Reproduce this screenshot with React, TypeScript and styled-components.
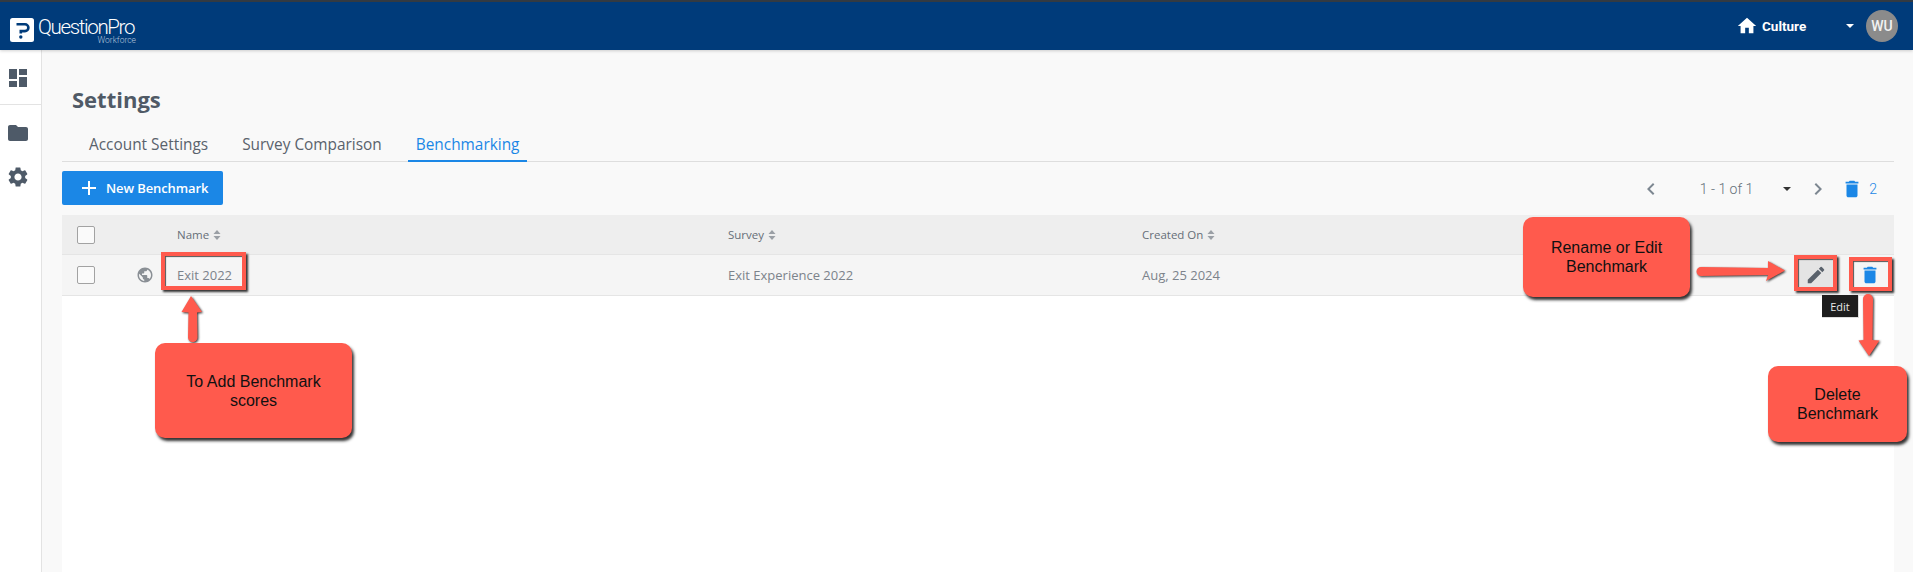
import React from "react";
import styled, { createGlobalStyle } from "styled-components";
import {
  MdAdd, MdChevronLeft, MdChevronRight, MdDashboard, MdDelete, MdEdit,
  MdFolder, MdHome, MdPublic, MdSettings,
} from "react-icons/md";

const Global = createGlobalStyle`
  html, body { margin: 0; padding: 0; height: 100%; background: #f9f9f9; }
  body { font-family: "Open Sans", "Liberation Sans", sans-serif; overflow: hidden; }
  * { box-sizing: border-box; }
`;

const Page = styled.div`
  position: relative;
  width: 1913px;
  height: 572px;
  overflow: hidden;
  display: flex;
  flex-direction: column;
`;

const Header = styled.header`
  height: 50px;
  flex: none;
  background: #003b7a;
  border-top: 2px solid #333a42;
  display: flex;
  align-items: center;
  padding: 0 15px 0 10px;
  box-shadow: 0 1px 3px rgba(0, 0, 0, .18);
  z-index: 1;
`;

const LogoMark = styled.svg`
  width: 24px;
  height: 24px;
  flex: none;
  margin-top: 8px;
`;

const LogoText = styled.div`
  margin-left: 4px;
  width: 98px;
  display: flex;
  flex-direction: column;
  align-items: flex-end;
  margin-top: 11px;
  color: #fff;
  font-family: "Roboto", sans-serif;
  font-weight: 300;
  white-space: nowrap;
`;

const LogoName = styled.span`
  align-self: flex-start;
  font-size: 20.5px;
  line-height: 17px;
  height: 17px;
  letter-spacing: -1.35px;
`;

const LogoSub = styled.span`
  font-size: 8.5px;
  line-height: 9px;
  height: 9px;
  color: #b6c6da;
`;

const HeaderRight = styled.div`
  margin-left: auto;
  display: flex;
  align-items: center;
  color: #fff;
`;

const HomeIcon = styled(MdHome)`
  font-size: 22px;
  margin-right: 4px;
`;

const Culture = styled.span`
  font-family: "Roboto", sans-serif;
  font-size: 13.5px;
  font-weight: 700;
  width: 84px;
`;

const Caret = styled.span<{ $color: string }>`
  width: 0;
  height: 0;
  border-left: 4px solid transparent;
  border-right: 4px solid transparent;
  border-top: 4px solid ${(p) => p.$color};
`;

const Avatar = styled.div`
  width: 32px;
  height: 32px;
  margin-left: 12px;
  border-radius: 50%;
  background: #8b8b8b;
  color: #f2f2f2;
  font-family: "Roboto", sans-serif;
  font-size: 14px;
  font-weight: 500;
  display: flex;
  align-items: center;
  justify-content: center;
`;

const Body = styled.div`
  flex: 1;
  display: flex;
  min-height: 0;
`;

const Sidebar = styled.nav`
  width: 42px;
  flex: none;
  background: #fff;
  border-right: 1px solid #e3e3e3;
  color: #4e5a68;
  display: flex;
  flex-direction: column;
`;

const SideItem = styled.div<{ $h: number; $line?: boolean }>`
  height: ${(p) => p.$h}px;
  padding: 2px 0 0 6px;
  display: flex;
  align-items: center;
  font-size: 24px;
  border-bottom: ${(p) => (p.$line ? "1px solid #e3e3e3" : "none")};
`;

const Main = styled.main`
  flex: 1;
  padding: 32px 19px 0 20px;
  display: flex;
  flex-direction: column;
`;

const Title = styled.h1`
  margin: 0 0 0 10px;
  height: 34px;
  font-size: 22px;
  line-height: 34px;
  font-weight: 700;
  color: #505a66;
`;

const Tabs = styled.div`
  margin-top: 12px;
  height: 34px;
  padding-left: 19px;
  display: flex;
  border-bottom: 1px solid #dedede;
`;

const Tab = styled.div<{ $active?: boolean }>`
  padding: 0 8px;
  margin-right: 18px;
  height: 34px;
  line-height: 34px;
  font-size: 15.4px;
  color: ${(p) => (p.$active ? "#1b87e6" : "#5a626c")};
  border-bottom: 2px solid ${(p) => (p.$active ? "#1b87e6" : "transparent")};
`;

const Toolbar = styled.div`
  margin-top: 9px;
  height: 34px;
  display: flex;
  align-items: center;
  justify-content: space-between;
`;

const NewButton = styled.div`
  width: 161px;
  height: 34px;
  border-radius: 2px;
  background: #1b87e6;
  color: #fff;
  font-size: 13px;
  font-weight: 600;
  letter-spacing: -.1px;
  white-space: nowrap;
  display: flex;
  align-items: center;
  padding-left: 15px;
  gap: 5px;
`;

const PlusIcon = styled(MdAdd)`
  font-size: 24px;
  flex: none;
`;

const Pager = styled.div`
  display: flex;
  align-items: center;
  color: #7a8590;
  font-family: "Roboto", sans-serif;
  font-weight: 300;
  font-size: 14px;
  margin: 2px 17px 0 0;
`;

const PagerText = styled.span`
  margin: 0 30px 0 37px;
  color: #66707a;
`;

const PagerCount = styled.span`
  color: #1b87e6;
  margin-left: 6px;
`;

const ChevronL = styled(MdChevronLeft)`
  font-size: 24px;
  color: #7d8791;
`;

const ChevronR = styled(MdChevronRight)`
  font-size: 24px;
  color: #7d8791;
  margin: 0 11px 0 15px;
`;

const BlueTrash = styled(MdDelete)`
  font-size: 22px;
  color: #1b87e6;
`;

const Table = styled.div`
  margin-top: 10px;
  flex: 1;
  background: #fff;
  display: flex;
  flex-direction: column;
`;

const Row = styled.div<{ $head?: boolean }>`
  display: grid;
  grid-template-columns: 60px 40px 551px 414px 1fr 96px;
  align-items: center;
  height: ${(p) => (p.$head ? 40 : 41)}px;
  padding-left: 15px;
  background: ${(p) => (p.$head ? "#eeeeee" : "#f5f5f5")};
  border-bottom: 1px solid #e5e5e5;
  color: ${(p) => (p.$head ? "#666e78" : "#7c838b")};
  font-size: ${(p) => (p.$head ? 11.5 : 13)}px;
`;

const Check = styled.span`
  width: 18px;
  height: 18px;
  border: 1px solid #a2a2a2;
  border-radius: 2px;
  background: #fafafa;
`;

const Cell = styled.span`
  display: flex;
  align-items: center;
  gap: 4px;
  white-space: nowrap;
`;

const GlobeCell = styled.span`
  margin-left: -1px;
  font-size: 18px;
  color: #8a8f95;
  display: flex;
`;

const Sort = styled.svg`
  width: 8px;
  height: 10px;
  fill: #9a9fa5;
`;

const Actions = styled.span`
  display: flex;
  align-items: center;
  font-size: 22px;
`;

const EditButton = styled.span`
  width: 36px;
  height: 30px;
  background: #e4e4e4;
  color: #5a626c;
  display: flex;
  align-items: center;
  justify-content: center;
`;

const TrashButton = styled.span`
  width: 36px;
  height: 28px;
  margin-left: 18px;
  color: #1b87e6;
  display: flex;
  align-items: center;
  justify-content: center;
`;

const Callout = styled.div<{ $x: number; $y: number; $w: number; $h: number }>`
  position: absolute;
  left: ${(p) => p.$x}px;
  top: ${(p) => p.$y}px;
  width: ${(p) => p.$w}px;
  height: ${(p) => p.$h}px;
  background: #ff5a4d;
  border-radius: 10px;
  box-shadow: 2px 3px 3px #333;
  color: #111;
  font-family: "Liberation Sans", Arial, sans-serif;
  font-size: 16px;
  line-height: 19px;
  text-align: center;
  display: flex;
  align-items: center;
  justify-content: center;
`;

const Frame = styled.div<{ $x: number; $y: number; $w: number; $h: number }>`
  position: absolute;
  left: ${(p) => p.$x}px;
  top: ${(p) => p.$y}px;
  width: ${(p) => p.$w}px;
  height: ${(p) => p.$h}px;
  border: 4px solid #ff5a4d;
  box-shadow: 2px 2px 2px #333, inset 1px 1px 1px #555;
`;

const Tooltip = styled.div`
  position: absolute;
  left: 1822px;
  top: 295px;
  width: 37px;
  height: 23px;
  background: #1d1d1d;
  border: 1px solid #ddd;
  border-width: 0 1px 1px 0;
  color: #e8e8e8;
  font-size: 11px;
  display: flex;
  align-items: center;
  justify-content: center;
`;

const Arrow = styled.svg<{ $x: number; $y: number }>`
  position: absolute;
  left: ${(p) => p.$x}px;
  top: ${(p) => p.$y}px;
  overflow: visible;
  fill: #ff5a4d;
  filter: drop-shadow(1.5px 1.5px 1px #333);
`;

const SortIcon = () => (
  <Sort viewBox="0 0 8 10"><path d="M4 0l3.500 4H.5zM4 10L.5 6h7z" /></Sort>
);

export default function App() {
  return (
    <Page>
      <Global />
      <Header>
        <LogoMark viewBox="0 0 24 24">
          <rect width="24" height="24" rx="2.5" fill="#fff" />
          <path d="M6.500 6.300H15a3.400 3.400 0 0 1 0 6.800H10.800V15.500" fill="none" stroke="#003b7a" strokeWidth="2.600" />
          <circle cx="10.800" cy="19" r="1.700" fill="#003b7a" />
        </LogoMark>
        <LogoText>
          <LogoName>QuestionPro</LogoName>
          <LogoSub>Workforce</LogoSub>
        </LogoText>
        <HeaderRight>
          <HomeIcon />
          <Culture>Culture</Culture>
          <Caret $color="#fff" />
          <Avatar>WU</Avatar>
        </HeaderRight>
      </Header>
      <Body>
        <Sidebar>
          <SideItem $h={55} $line><MdDashboard /></SideItem>
          <SideItem $h={54}><MdFolder /></SideItem>
          <SideItem $h={34}><MdSettings /></SideItem>
        </Sidebar>
        <Main>
          <Title>Settings</Title>
          <Tabs>
            <Tab>Account Settings</Tab>
            <Tab>Survey Comparison</Tab>
            <Tab $active>Benchmarking</Tab>
          </Tabs>
          <Toolbar>
            <NewButton><PlusIcon />New Benchmark</NewButton>
            <Pager>
              <ChevronL />
              <PagerText>1 - 1 of 1</PagerText>
              <Caret $color="#333" />
              <ChevronR />
              <BlueTrash />
              <PagerCount>2</PagerCount>
            </Pager>
          </Toolbar>
          <Table>
            <Row $head>
              <Check />
              <span />
              <Cell>Name <SortIcon /></Cell>
              <Cell>Survey <SortIcon /></Cell>
              <Cell>Created On <SortIcon /></Cell>
              <span />
            </Row>
            <Row>
              <Check />
              <GlobeCell><MdPublic /></GlobeCell>
              <Cell>Exit 2022</Cell>
              <Cell>Exit Experience 2022</Cell>
              <Cell>Aug, 25 2024</Cell>
              <Actions>
                <EditButton><MdEdit /></EditButton>
                <TrashButton><MdDelete /></TrashButton>
              </Actions>
            </Row>
          </Table>
        </Main>
      </Body>

      <Frame $x={161} $y={252} $w={85} $h={38} />
      <Frame $x={1794} $y={255} $w={43} $h={36} />
      <Frame $x={1849} $y={257} $w={43} $h={34} />
      <Tooltip>Edit</Tooltip>

      <Arrow $x={181} $y={296} width="22" height="45" viewBox="0 0 22 45">
        <path d="M10 0l11 16-5 .5.5 25a4 4 0 0 1-9.500 0l.5-25-7-.5z" />
      </Arrow>
      <Arrow $x={1697} $y={261} width="88" height="20" viewBox="0 0 88 20">
        <path d="M71 0l17 9.500-19 10.500 2-6-67 1a4.500 4.500 0 0 1 0-9l67 1z" />
      </Arrow>
      <Arrow $x={1858} $y={296} width="22" height="60" viewBox="0 0 22 60">
        <path d="M5 3a5 5 0 0 1 10 0l-.5 41 7 .5L11 60 .5 44.500l5-.5z" />
      </Arrow>

      <Callout $x={155} $y={343} $w={197} $h={95}>To Add Benchmark<br />scores</Callout>
      <Callout $x={1523} $y={217} $w={167} $h={80}>Rename or Edit<br />Benchmark</Callout>
      <Callout $x={1768} $y={366} $w={139} $h={76}>Delete<br />Benchmark</Callout>
    </Page>
  );
}
